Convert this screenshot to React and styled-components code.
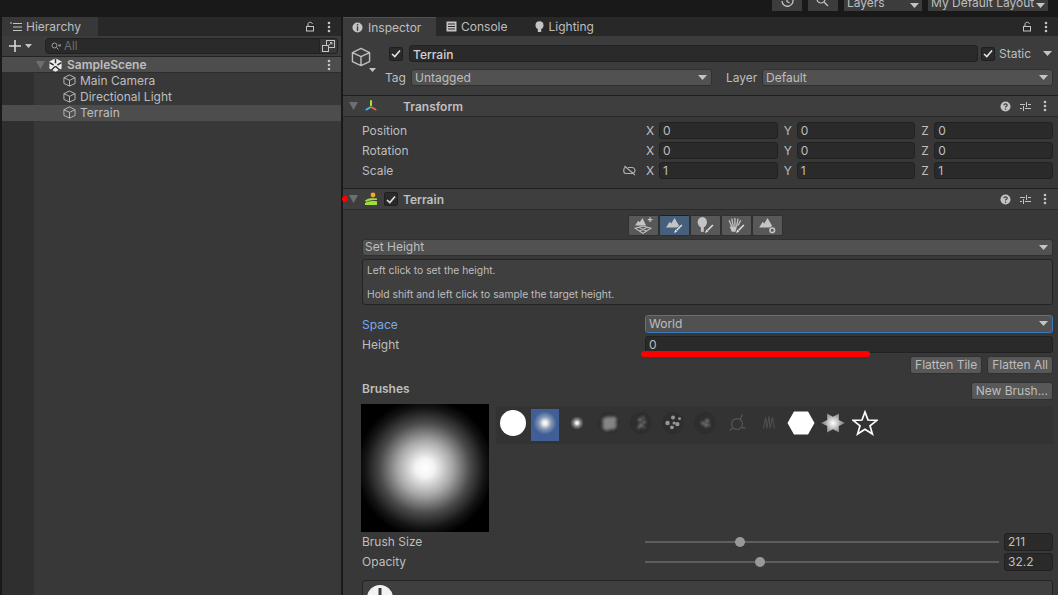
import React from "react";
import styled, { createGlobalStyle } from "styled-components";

const GlobalStyle = createGlobalStyle`
  html, body {
    margin: 0;
    background: #191919;
  }
  * {
    box-sizing: border-box;
  }
`;

const Cube = ({ size = 13 }) => (
  <svg width={size} height={size} viewBox="0 0 14 14" fill="none" stroke="#bebebe" strokeWidth="1" strokeLinejoin="round">
    <path d="M7 1 L13 4 V10.2 L7 13 L1 10.2 V4 Z M1 4 L7 6.8 L13 4 M7 6.8 V13" />
  </svg>
);

const Kebab = () => (
  <svg width="4" height="12" viewBox="0 0 4 12" fill="#c4c4c4">
    <circle cx="2" cy="2" r="1.3" />
    <circle cx="2" cy="6" r="1.3" />
    <circle cx="2" cy="10" r="1.3" />
  </svg>
);

const Lock = () => (
  <svg width="10" height="11" viewBox="0 0 10 11" fill="none" stroke="#c4c4c4" strokeWidth="1">
    <rect x="1.5" y="5.5" width="7" height="4.5" />
    <path d="M3 5 V3 C3 0.8 7 0.6 7.5 3" />
  </svg>
);

const Arrow = ({ color = "#c4c4c4", w = 9, h = 5 }) => (
  <svg width={w} height={h} viewBox="0 0 9 5" fill={color}>
    <path d="M0 0 H9 L4.5 5 Z" />
  </svg>
);

const Foldout = () => (
  <svg width="9" height="8" viewBox="0 0 9 8" fill="#6e6e6e">
    <path d="M0 0 H9 L4.5 8 Z" />
  </svg>
);

const Check = () => (
  <svg width="10" height="9" viewBox="0 0 10 9" fill="none" stroke="#e4e4e4" strokeWidth="1.6">
    <path d="M1 5 L3.8 7.5 L9 1.5" />
  </svg>
);

const Help = () => (
  <svg width="11" height="11" viewBox="0 0 11 11">
    <circle cx="5.5" cy="5.5" r="5" fill="#c4c4c4" />
    <path d="M3.8 4.2 C3.9 2.4 7.2 2.4 7.2 4.2 C7.2 5.4 5.5 5.3 5.5 6.6" fill="none" stroke="#3e3e3e" strokeWidth="1.2" />
    <rect x="4.9" y="7.5" width="1.2" height="1.3" fill="#3e3e3e" />
  </svg>
);

const Presets = () => (
  <svg width="11" height="11" viewBox="0 0 11 11" stroke="#c4c4c4" strokeWidth="1" fill="none">
    <path d="M0 3.5 H5 M8 3.5 H11 M6.5 1 V6 M0 7.5 H2 M5 7.5 H11 M3.5 5 V10" />
  </svg>
);

const HeaderActions = () => (
  <Actions>
    <Help />
    <Presets />
    <Kebab />
  </Actions>
);

const UnityLogo = () => (
  <svg width="13" height="14" viewBox="0 0 13 14">
    <path d="M6.5 0.3 L12.6 3.6 V10.4 L6.5 13.7 L0.4 10.4 V3.6 Z" fill="#eeeeee" />
    <path d="M6.5 0.5 V5.2 M6.5 8.2 L2.4 12 M6.5 8.2 L10.6 12 M0.6 4.6 L4.6 7 M12.4 4.6 L8.4 7" stroke="#333333" strokeWidth="1.5" fill="none" />
  </svg>
);

const HierarchyIcon = () => (
  <svg width="12" height="10" viewBox="0 0 12 10" stroke="#c4c4c4" strokeWidth="1" fill="none">
    <path d="M3 1.5 H12 M3 5 H12 M3 8.5 H12 M0 1 H2" />
  </svg>
);

const InfoIcon = () => (
  <svg width="11" height="11" viewBox="0 0 11 11">
    <circle cx="5.5" cy="5.5" r="5" fill="#c4c4c4" />
    <rect x="4.8" y="2" width="1.4" height="1.4" fill="#3c3c3c" />
    <rect x="4.8" y="4.3" width="1.4" height="4.6" fill="#3c3c3c" />
  </svg>
);

const ConsoleIcon = () => (
  <svg width="11" height="11" viewBox="0 0 11 11">
    <rect x="0.5" y="0.5" width="10" height="10" fill="#c4c4c4" />
    <path d="M2 3 H9 M2 5.5 H9 M2 8 H9" stroke="#282828" strokeWidth="1" />
  </svg>
);

const BulbIcon = () => (
  <svg width="9" height="12" viewBox="0 0 9 12" fill="#c4c4c4">
    <circle cx="4.5" cy="4.2" r="4" />
    <rect x="2.8" y="8" width="3.4" height="3" />
  </svg>
);

const TransformIcon = () => (
  <svg width="14" height="14" viewBox="0 0 14 14" fill="none" strokeWidth="2" strokeLinecap="round">
    <path d="M7 6.5 V2" stroke="#a6e22e" />
    <path d="M6 8.5 L2.5 10.5" stroke="#4fb3ee" />
    <path d="M8 8.5 L11.5 10.5" stroke="#ee6a3c" />
  </svg>
);

const TerrainIcon = () => (
  <svg width="14" height="14" viewBox="0 0 14 14">
    <circle cx="9" cy="3" r="2.4" fill="#f5a623" />
    <path d="M1 8.6 C4 6 8 6 13 6.6 V8 C8 7.6 5 8.4 2 10 Z" fill="#9fdc3c" />
    <path d="M1 13 V11 C5 8.8 9 8.6 13 9.2 V13 Z" fill="#9fdc3c" />
  </svg>
);

const Mountain = () => <path d="M1 10 L4.5 4.5 L6 6 L9 1 L13.5 8.5 L11 10 Z" fill="#c4c4c4" />;

const BrushStroke = () => (
  <>
    <path d="M11 12.5 L16 7.5" stroke="#e0e0e0" strokeWidth="1.5" />
    <path d="M8.5 15 L9.8 11.8 L11.7 13.7 Z" fill="#e0e0e0" />
  </>
);

const ToolIcon = ({ kind }) => (
  <svg width="19" height="17" viewBox="0 0 18 16">
    {kind === "create" && (
      <>
        <path d="M1 8 L4 3.5 L5.5 5 L8 1 L11.5 8 Z" fill="#c4c4c4" />
        <path d="M13 2.5 H17.5 M15.2 0.3 V4.7" stroke="#c4c4c4" strokeWidth="1.2" />
        <path d="M1 10.5 L8.5 8.5 L16 10.5 L8.5 15.5 Z M4.5 9.6 L12 13.4 M12.5 9.6 L5 13.4" stroke="#c4c4c4" strokeWidth="1" fill="none" />
      </>
    )}
    {kind === "paint" && (
      <>
        <Mountain />
        <BrushStroke />
      </>
    )}
    {kind === "tree" && (
      <>
        <ellipse cx="6" cy="5" rx="4.4" ry="5" fill="#c4c4c4" />
        <rect x="4.6" y="9" width="2.8" height="5" fill="#c4c4c4" />
        <BrushStroke />
      </>
    )}
    {kind === "detail" && (
      <>
        <path d="M2 3 L4.5 9 M4.5 1.5 L6 9 M7.5 1 V9 M10.5 1.5 L9 9 M13 3 L10.5 8" stroke="#c4c4c4" strokeWidth="1.2" />
        <path d="M2.5 9 H9.5 L8 14 H4.5 Z" fill="#c4c4c4" />
        <BrushStroke />
      </>
    )}
    {kind === "settings" && (
      <>
        <Mountain />
        <circle cx="13.5" cy="12.5" r="2.2" fill="#585858" stroke="#c4c4c4" strokeWidth="1.5" />
      </>
    )}
  </svg>
);

const brushBlobs = {
  a: [[11, 10, 5], [14, 13, 4], [9, 14, 4], [15, 8, 3], [8, 9, 3]],
  b: [[10, 8, 1.8], [14, 10, 1.6], [11, 13, 2], [13, 6, 1.2], [9, 15, 1.2], [14, 15, 1]],
  c: [[6, 11, 2], [11, 6, 1.8], [15, 12, 2], [10, 15, 1.7], [17, 7, 1.3], [12, 11, 1.4]],
  d: [[9, 11, 1.7], [13, 9, 1.9], [12, 13, 1.8], [15, 13, 1]],
};

const BlobBrush = ({ id, blobs, level, blur = 0.8 }) => (
  <svg width="24" height="24" viewBox="0 0 22 22">
    <defs>
      <filter id={id} x="-50%" y="-50%" width="200%" height="200%">
        <feGaussianBlur stdDeviation={blur} />
      </filter>
    </defs>
    <circle cx="11" cy="11" r="10" fill="#2e2e2e" />
    <g filter={`url(#${id})`} fill={level}>
      {blobs.map(([x, y, r], i) => (
        <circle key={i} cx={x} cy={y} r={r} />
      ))}
    </g>
  </svg>
);

const sliders = [
  { label: "Brush Size", value: "211", percent: 26.75 },
  { label: "Opacity", value: "32.2", percent: 32.5 },
];

const vectors = [
  { label: "Position", values: ["0", "0", "0"] },
  { label: "Rotation", values: ["0", "0", "0"] },
  { label: "Scale", values: ["1", "1", "1"], linked: true },
];

function App() {
  return (
    <>
      <GlobalStyle />
      <Page>
        <TopBar>
          <TopButton $width={30}>
            <svg width="14" height="11" viewBox="0 3 14 11" fill="none" stroke="#c4c4c4" strokeWidth="1.3">
              <path d="M2 7 A5.5 5.5 0 1 0 4 2.5 M7 4 V7.5 L9.5 9" />
            </svg>
          </TopButton>
          <TopButton $width={30}>
            <svg width="14" height="11" viewBox="0 0 14 11" fill="none" stroke="#c4c4c4" strokeWidth="1.2">
              <circle cx="5" cy="2" r="4" />
              <path d="M8 5 L12 9" />
            </svg>
          </TopButton>
          <TopButton $width={78}>
            <span>Layers</span>
            <Arrow />
          </TopButton>
          <TopButton $width={120}>
            <span>My Default Layout</span>
            <Arrow />
          </TopButton>
        </TopBar>

        <Panels>
          <HierarchyPanel>
            <TabBar>
              <HierarchyTab>
                <HierarchyIcon />
                Hierarchy
              </HierarchyTab>
              <TabActions>
                <Lock />
                <Kebab />
              </TabActions>
            </TabBar>
            <HierarchyToolbar>
              <AddButton>
                <svg width="12" height="12" viewBox="0 0 12 12" stroke="#d8d8d8" strokeWidth="1.6">
                  <path d="M0 6 H12 M6 0 V12" />
                </svg>
                <Arrow w={7} h={4} />
              </AddButton>
              <SearchBox>
                <svg width="10" height="9" viewBox="0 0 10 9" fill="none" stroke="#a0a0a0" strokeWidth="1">
                  <circle cx="3.5" cy="3.5" r="2.5" />
                  <path d="M5.5 5.5 L7.5 7.5 M7.5 3 H10 L8.75 4.5 Z" />
                </svg>
                All
              </SearchBox>
              <SearchToggle>
                <svg width="13" height="12" viewBox="0 0 13 12" fill="none" stroke="#c4c4c4" strokeWidth="1">
                  <rect x="4.5" y="0.5" width="8" height="7" />
                  <rect x="0.5" y="5.5" width="6" height="6" fill="#383838" />
                  <path d="M7 5 L10 2.5 M8 2.5 H10 V4.5" />
                </svg>
              </SearchToggle>
            </HierarchyToolbar>
            <SceneRow>
              <Foldout />
              <UnityLogo />
              <SceneName>SampleScene</SceneName>
              <Kebab />
            </SceneRow>
            <TreeArea>
              <Gutter />
              <TreeList>
                <TreeRow>
                  <Cube />
                  Main Camera
                </TreeRow>
                <TreeRow>
                  <Cube />
                  Directional Light
                </TreeRow>
                <TreeRow $selected>
                  <Cube />
                  Terrain
                </TreeRow>
              </TreeList>
            </TreeArea>
          </HierarchyPanel>

          <InspectorPanel>
            <TabBar>
              <InspectorTab>
                <InfoIcon />
                Inspector
              </InspectorTab>
              <PlainTab>
                <ConsoleIcon />
                Console
              </PlainTab>
              <PlainTab>
                <BulbIcon />
                Lighting
              </PlainTab>
              <TabActions>
                <Lock />
                <Kebab />
              </TabActions>
            </TabBar>

            <ObjectHeader>
              <ObjectIcon>
                <Cube size={20} />
                <Arrow w={7} h={4} />
              </ObjectIcon>
              <ObjectFields>
                <NameRow>
                  <CheckBox>
                    <Check />
                  </CheckBox>
                  <NameInput>Terrain</NameInput>
                  <CheckBox>
                    <Check />
                  </CheckBox>
                  <StaticLabel>Static</StaticLabel>
                  <Arrow />
                </NameRow>
                <TagRow>
                  <TagLabel>Tag</TagLabel>
                  <Dropdown $width={301}>
                    Untagged
                    <Arrow />
                  </Dropdown>
                  <LayerLabel>Layer</LayerLabel>
                  <Dropdown $width={291}>
                    Default
                    <Arrow />
                  </Dropdown>
                </TagRow>
              </ObjectFields>
            </ObjectHeader>

            <ComponentHeader>
              <Foldout />
              <TransformIcon />
              <TransformTitle>Transform</TransformTitle>
              <HeaderActions />
            </ComponentHeader>
            <TransformBody>
              {vectors.map((v) => (
                <VectorRow key={v.label}>
                  <VectorLabel>
                    {v.label}
                    {v.linked && (
                      <svg width="14" height="11" viewBox="0 0 14 11" fill="none" stroke="#b0b0b0" strokeWidth="1.1">
                        <path d="M4 2.5 H2.8 C0 2.5 0 8.5 2.8 8.5 H9 C10.5 8.5 12 7 12 5.5 C12 4 10.5 2.5 9 2.5 H5 M1.5 1 L12 10" />
                      </svg>
                    )}
                  </VectorLabel>
                  <VectorFields>
                    {v.values.map((val, i) => (
                      <Axis key={i}>
                        <AxisLabel>{"XYZ"[i]}</AxisLabel>
                        <NumberField>{val}</NumberField>
                      </Axis>
                    ))}
                  </VectorFields>
                </VectorRow>
              ))}
            </TransformBody>

            <ComponentHeader>
              <Foldout />
              <TerrainIcon />
              <CheckBox>
                <Check />
              </CheckBox>
              <TerrainTitle>Terrain</TerrainTitle>
              <HeaderActions />
              <RedDot />
            </ComponentHeader>

            <TerrainBody>
              <ToolStrip>
                <ToolButton>
                  <ToolIcon kind="create" />
                </ToolButton>
                <ToolButton $active>
                  <ToolIcon kind="paint" />
                </ToolButton>
                <ToolButton>
                  <ToolIcon kind="tree" />
                </ToolButton>
                <ToolButton>
                  <ToolIcon kind="detail" />
                </ToolButton>
                <ToolButton>
                  <ToolIcon kind="settings" />
                </ToolButton>
              </ToolStrip>

              <ModeDropdown>
                Set Height
                <Arrow />
              </ModeDropdown>

              <HelpBox>
                <p>Left click to set the height.</p>
                <p>Hold shift and left click to sample the target height.</p>
              </HelpBox>

              <PropertyRow>
                <PropertyLabel $focused>Space</PropertyLabel>
                <FocusedDropdown>
                  World
                  <Arrow />
                </FocusedDropdown>
              </PropertyRow>
              <HeightRow>
                <PropertyLabel>Height</PropertyLabel>
                <WideField>
                  0
                  <RedLine />
                </WideField>
              </HeightRow>

              <ButtonRow>
                <ActionButton>Flatten Tile</ActionButton>
                <ActionButton>Flatten All</ActionButton>
              </ButtonRow>

              <BrushesRow>
                <BrushesTitle>Brushes</BrushesTitle>
                <ActionButton>New Brush...</ActionButton>
              </BrushesRow>

              <BrushArea>
                <BrushPreview />
                <BrushStrip>
                  <Thumb>
                    <svg width="26" height="26" viewBox="0 0 26 26">
                      <circle cx="13" cy="13" r="13" fill="#fff" />
                    </svg>
                  </Thumb>
                  <Thumb $selected>
                    <SoftDot $size={24} />
                  </Thumb>
                  <Thumb>
                    <SoftDot $size={14} />
                  </Thumb>
                  <Thumb>
                    <BlobBrush id="bA" blobs={brushBlobs.a} level="#858585" blur={1.4} />
                  </Thumb>
                  <Thumb>
                    <BlobBrush id="bB" blobs={brushBlobs.b} level="#6e6e6e" />
                  </Thumb>
                  <Thumb>
                    <BlobBrush id="bC" blobs={brushBlobs.c} level="#969696" blur={0.6} />
                  </Thumb>
                  <Thumb>
                    <BlobBrush id="bD" blobs={brushBlobs.d} level="#727272" />
                  </Thumb>
                  <Thumb>
                    <svg width="22" height="24" viewBox="0 0 20 22" fill="none" stroke="#5a5a5a" strokeWidth="1">
                      <circle cx="10" cy="12" r="5" />
                      <path d="M13 8 L15 3 M14 15 L18 16 M6 16 L3 18" />
                    </svg>
                  </Thumb>
                  <Thumb>
                    <svg width="18" height="20" viewBox="0 0 16 18" fill="none" stroke="#4e4e4e" strokeWidth="1">
                      <path d="M3 14 L5 4 L6 14 L8 3 L9 14 L11 4 L13 14" />
                    </svg>
                  </Thumb>
                  <Thumb>
                    <svg width="28" height="24" viewBox="0 0 28 24">
                      <path d="M7 0.5 H21 L27.5 12 L21 23.5 H7 L0.5 12 Z" fill="#fff" />
                    </svg>
                  </Thumb>
                  <Thumb>
                    <StarBurst />
                  </Thumb>
                  <Thumb>
                    <svg width="26" height="26" viewBox="0 0 26 26" fill="none" stroke="#fff" strokeWidth="1.7" strokeLinejoin="miter">
                      <path d="M13 2 L16 10 L25 10.3 L18 15.8 L20.4 24 L13 19.3 L5.6 24 L8 15.8 L1 10.3 L10 10 Z" />
                    </svg>
                  </Thumb>
                </BrushStrip>
              </BrushArea>

              <SliderList>
                {sliders.map((s) => (
                  <SliderRow key={s.label}>
                    <SliderLabel>{s.label}</SliderLabel>
                    <SliderTrack>
                      <SliderHandle style={{ left: `${s.percent}%` }} />
                    </SliderTrack>
                    <SliderValue>{s.value}</SliderValue>
                  </SliderRow>
                ))}
              </SliderList>

              <WarningBox>
                <svg width="26" height="26" viewBox="0 0 26 26">
                  <circle cx="13" cy="13" r="13" fill="#f2f2f2" />
                  <rect x="11.5" y="3" width="3" height="12" fill="#3c3c3c" />
                </svg>
              </WarningBox>
            </TerrainBody>
          </InspectorPanel>
        </Panels>
      </Page>
    </>
  );
}

export default App;

const Page = styled.div`
  width: 1058px;
  height: 595px;
  overflow: hidden;
  display: flex;
  flex-direction: column;
  background: #191919;
  color: #bebebe;
  font-family: "Inter", "Liberation Sans", sans-serif;
  font-size: 12px;
`;

const TopBar = styled.div`
  height: 17px;
  flex: none;
  display: flex;
  justify-content: flex-end;
  gap: 6px;
  padding: 0 10px 6px 0;
  overflow: hidden;
`;

const TopButton = styled.div`
  width: ${(p) => p.$width}px;
  height: 11px;
  background: #3c3c3c;
  display: flex;
  align-items: flex-end;
  justify-content: ${(p) => (p.$width > 30 ? "space-between" : "center")};
  padding: 0 3px;
  line-height: 13px;
  overflow: hidden;

  span {
    white-space: nowrap;
    margin-bottom: 2px;
  }
  svg:last-child {
    margin-bottom: 3px;
    flex: none;
  }
`;

const Panels = styled.div`
  flex: 1;
  min-height: 0;
  display: flex;
  gap: 2px;
  padding-left: 2px;
`;

const HierarchyPanel = styled.div`
  width: 339px;
  flex: none;
  display: flex;
  flex-direction: column;
  background: #383838;
`;

const InspectorPanel = styled.div`
  flex: 1;
  min-width: 0;
  display: flex;
  flex-direction: column;
  background: #383838;
`;

const TabBar = styled.div`
  height: 19px;
  flex: none;
  display: flex;
  align-items: stretch;
  background: #282828;
`;

const TabActions = styled.div`
  margin-left: auto;
  display: flex;
  align-items: center;
  gap: 12px;
  padding-right: 10px;
`;

const Tab = styled.div`
  display: flex;
  align-items: center;
  gap: 4px;
`;

const HierarchyTab = styled(Tab)`
  width: 96px;
  padding-left: 8px;
  background: #383838;
`;

const InspectorTab = styled(Tab)`
  width: 93px;
  padding-left: 9px;
  gap: 5px;
  background: #3c3c3c;
  border-top: 1px solid #2c5d87;
`;

const PlainTab = styled(Tab)`
  padding: 0 18px 0 10px;
`;

const HierarchyToolbar = styled.div`
  height: 21px;
  flex: none;
  display: flex;
  align-items: center;
  background: #3c3c3c;
  border-bottom: 1px solid #232323;
  padding-left: 7px;
`;

const AddButton = styled.div`
  width: 36px;
  display: flex;
  align-items: center;
  gap: 4px;
`;

const SearchBox = styled.div`
  width: 275px;
  height: 16px;
  display: flex;
  align-items: center;
  gap: 3px;
  padding-left: 5px;
  color: #6f6f6f;
  font-size: 11.5px;
  background: #2a2a2a;
  border: 1px solid #212121;
  border-radius: 4px 0 0 4px;
`;

const SearchToggle = styled.div`
  width: 18px;
  height: 16px;
  display: flex;
  align-items: center;
  justify-content: center;
  background: #383838;
  border: 1px solid #212121;
  border-left: none;
  border-radius: 0 4px 4px 0;
`;

const SceneRow = styled.div`
  height: 16px;
  flex: none;
  display: flex;
  align-items: center;
  padding: 0 10px 0 34px;
  background: #4d4d4d;
  border-bottom: 1px solid #2d2d2d;
  gap: 4px;
`;

const SceneName = styled.div`
  flex: 1;
  font-weight: 600;
  margin-left: 1px;
  padding-bottom: 1px;
`;

const TreeArea = styled.div`
  flex: 1;
  display: flex;
`;

const Gutter = styled.div`
  width: 32px;
  flex: none;
  background: #2f2f2f;
`;

const TreeList = styled.div`
  flex: 1;
`;

const TreeRow = styled.div`
  height: 16px;
  display: flex;
  align-items: center;
  gap: 4px;
  padding-bottom: 1px;
  margin-left: ${(p) => (p.$selected ? "-32px" : "0")};
  padding-left: ${(p) => (p.$selected ? "61px" : "29px")};
  background: ${(p) => (p.$selected ? "#4d4d4d" : "transparent")};
`;

const ObjectHeader = styled.div`
  height: 60px;
  flex: none;
  display: flex;
  background: #3c3c3c;
  border-bottom: 1px solid #1f1f1f;
`;

const ObjectIcon = styled.div`
  width: 46px;
  padding: 11px 0 0 8px;
  position: relative;

  svg:last-child {
    position: absolute;
    left: 26px;
    top: 32px;
  }
`;

const ObjectFields = styled.div`
  flex: 1;
  padding: 9px 5px 0 0;
  display: flex;
  flex-direction: column;
  gap: 7px;
`;

const NameRow = styled.div`
  height: 17px;
  display: flex;
  align-items: center;
`;

const CheckBox = styled.div`
  width: 14px;
  height: 14px;
  flex: none;
  display: flex;
  align-items: center;
  justify-content: center;
  background: #2a2a2a;
  border: 1px solid #1f1f1f;
  border-radius: 2px;
`;

const NameInput = styled.div`
  width: 569px;
  height: 17px;
  margin: 0 3px 0 6px;
  padding-left: 3px;
  line-height: 17px;
  font-weight: 500;
  color: #d2d2d2;
  background: #2a2a2a;
  border: 1px solid #212121;
  border-radius: 3px;
`;

const StaticLabel = styled.div`
  margin: 0 12px 0 4px;
  width: 32px;
`;

const TagRow = styled.div`
  height: 17px;
  display: flex;
  align-items: center;
`;

const TagLabel = styled.div`
  width: 26px;
  margin-left: -4px;
  flex: none;
`;

const LayerLabel = styled.div`
  margin-left: 14px;
  width: 36px;
  flex: none;
`;

const Dropdown = styled.div`
  width: ${(p) => p.$width}px;
  height: 17px;
  flex: none;
  display: flex;
  align-items: center;
  justify-content: space-between;
  padding: 0 4px 1px 3px;
  background: #515151;
  border: 1px solid #303030;
  border-radius: 3px;
`;

const ComponentHeader = styled.div`
  height: 21px;
  flex: none;
  display: flex;
  align-items: center;
  gap: 6px;
  padding: 0 11px 0 6px;
  position: relative;
  background: #3e3e3e;
  border-bottom: 1px solid #2a2a2a;
`;

const Actions = styled.div`
  margin-left: auto;
  display: flex;
  align-items: center;
  gap: 9px;

  svg:last-child {
    margin-left: 3px;
  }
`;

const TransformTitle = styled.div`
  font-weight: 600;
  margin-left: 19px;
`;

const TerrainTitle = styled.div`
  font-weight: 600;
  margin-left: -1px;
`;

const RedDot = styled.div`
  position: absolute;
  left: -1px;
  top: 7px;
  width: 6px;
  height: 6px;
  border-radius: 50%;
  background: #ff0000;
`;

const TransformBody = styled.div`
  height: 72px;
  flex: none;
  padding: 5px 5px 0 19px;
  display: flex;
  flex-direction: column;
  gap: 3px;
  border-bottom: 1px solid #1f1f1f;
`;

const VectorRow = styled.div`
  height: 17px;
  display: flex;
  align-items: center;
`;

const VectorLabel = styled.div`
  width: 284px;
  flex: none;
  display: flex;
  align-items: center;
  justify-content: space-between;
  padding-right: 9px;
`;

const VectorFields = styled.div`
  flex: 1;
  display: grid;
  grid-template-columns: repeat(3, 1fr);
  gap: 6px;
`;

const Axis = styled.div`
  display: flex;
  align-items: center;
`;

const AxisLabel = styled.div`
  width: 13px;
  flex: none;
`;

const NumberField = styled.div`
  flex: 1;
  height: 17px;
  padding-left: 3px;
  line-height: 15px;
  background: #2a2a2a;
  border: 1px solid #212121;
  border-radius: 3px;
`;

const TerrainBody = styled.div`
  flex: 1;
  min-height: 0;
  padding: 5px 5px 0 19px;
  display: flex;
  flex-direction: column;
`;

const ToolStrip = styled.div`
  display: flex;
  align-self: center;
  margin-right: 5px;
  height: 21px;
  flex: none;
`;

const ToolButton = styled.div`
  width: 31px;
  display: flex;
  align-items: center;
  justify-content: center;
  background: ${(p) => (p.$active ? "#46607c" : "#585858")};
  border: 1px solid #303030;
  border-top-color: ${(p) => (p.$active ? "#1f1f1f" : "#303030")};
  border-radius: 2px;
`;

const ModeDropdown = styled(Dropdown)`
  width: 100%;
  margin-top: 3px;
  padding: 0 4px 2px 2px;

  svg {
    margin-top: 2px;
  }
`;

const HelpBox = styled.div`
  height: 46px;
  flex: none;
  margin-top: 3px;
  padding: 4px 4px;
  font-size: 10.3px;
  line-height: 12px;
  background: #3f3f3f;
  border: 1px solid #232323;
  border-radius: 3px;

  p {
    margin: 0 0 12px;
  }
`;

const PropertyRow = styled.div`
  height: 18px;
  flex: none;
  margin-top: 10px;
  display: flex;
  align-items: center;
`;

const HeightRow = styled(PropertyRow)`
  height: 17px;
  margin-top: 3px;
`;

const PropertyLabel = styled.div`
  width: 283px;
  flex: none;
  color: ${(p) => (p.$focused ? "#7baae6" : "#bebebe")};
`;

const FocusedDropdown = styled(Dropdown)`
  flex: 1;
  height: 18px;
  border-color: #3a79bb;
`;

const WideField = styled.div`
  flex: 1;
  height: 17px;
  padding-left: 3px;
  line-height: 16px;
  position: relative;
  background: #2a2a2a;
  border: 1px solid #212121;
  border-radius: 3px;
`;

const RedLine = styled.div`
  position: absolute;
  left: -5px;
  top: 14px;
  width: 229px;
  height: 6px;
  border-radius: 3px;
  background: #ff0000;
`;

const ButtonRow = styled.div`
  display: flex;
  justify-content: flex-end;
  gap: 5px;
  margin-top: 3px;
  height: 18px;
  flex: none;
`;

const ActionButton = styled.div`
  height: 18px;
  padding: 0 4px;
  line-height: 15px;
  background: #585858;
  border: 1px solid #303030;
  border-radius: 3px;
`;

const BrushesRow = styled.div`
  display: flex;
  justify-content: space-between;
  align-items: flex-start;
  margin-top: 8px;
  height: 18px;
  flex: none;
`;

const BrushesTitle = styled.div`
  font-weight: 600;
  line-height: 13px;
`;

const BrushArea = styled.div`
  display: flex;
  gap: 7px;
  margin-top: 4px;
  margin-left: -1px;
  height: 128px;
  flex: none;
`;

const BrushPreview = styled.div`
  width: 128px;
  height: 128px;
  flex: none;
  background: radial-gradient(circle at 50% 50%, #fff 0, #f4f4f4 10%, #a8a8a8 30%, #4a4a4a 50%, #151515 66%, #000 76%);
`;

const BrushStrip = styled.div`
  flex: 1;
  height: 38px;
  margin-top: 2px;
  padding-left: 1px;
  display: flex;
  align-items: center;
  background: #333333;
`;

const Thumb = styled.div`
  width: 32px;
  height: 32px;
  flex: none;
  display: flex;
  align-items: center;
  justify-content: center;
  padding-bottom: 4px;
  border-left: 2px solid transparent;
  border-right: 2px solid transparent;
  background: ${(p) => (p.$selected ? "#3f5f96" : "transparent")};
  background-clip: padding-box;
`;

const SoftDot = styled.div`
  width: ${(p) => p.$size}px;
  height: ${(p) => p.$size}px;
  flex: none;
  border-radius: 50%;
  background: radial-gradient(circle, #fff 0, #e8e8e8 14%, rgba(210, 210, 210, 0.5) 36%, rgba(160, 160, 160, 0) 68%);
`;

const StarBurst = styled.div`
  width: 24px;
  height: 22px;
  flex: none;
  background: radial-gradient(circle, #fff 0, #c8c8c8 30%, #777 70%);
  clip-path: polygon(100% 50%, 74% 36%, 75% 7%, 50% 22%, 25% 7%, 26% 36%, 0 50%, 26% 64%, 25% 93%, 50% 78%, 75% 93%, 74% 64%);
`;

const SliderList = styled.div`
  display: flex;
  flex-direction: column;
  gap: 2px;
  margin-top: 1px;
  flex: none;
`;

const SliderRow = styled.div`
  height: 18px;
  display: flex;
  align-items: center;
`;

const SliderLabel = styled.div`
  width: 283px;
  flex: none;
  padding-bottom: 1px;
`;

const SliderTrack = styled.div`
  flex: 1;
  height: 2px;
  margin-right: 5px;
  position: relative;
  background: #5e5e5e;
`;

const SliderHandle = styled.div`
  position: absolute;
  top: -4px;
  width: 10px;
  height: 10px;
  margin-left: -5px;
  border-radius: 50%;
  background: #999999;
`;

const SliderValue = styled.div`
  width: 49px;
  height: 18px;
  padding-left: 3px;
  line-height: 16px;
  background: #2a2a2a;
  border: 1px solid #212121;
  border-radius: 3px;
`;

const WarningBox = styled.div`
  height: 60px;
  flex: none;
  margin-top: 9px;
  padding: 4px;
  background: #3f3f3f;
  border: 1px solid #232323;
  border-radius: 3px;
`;
